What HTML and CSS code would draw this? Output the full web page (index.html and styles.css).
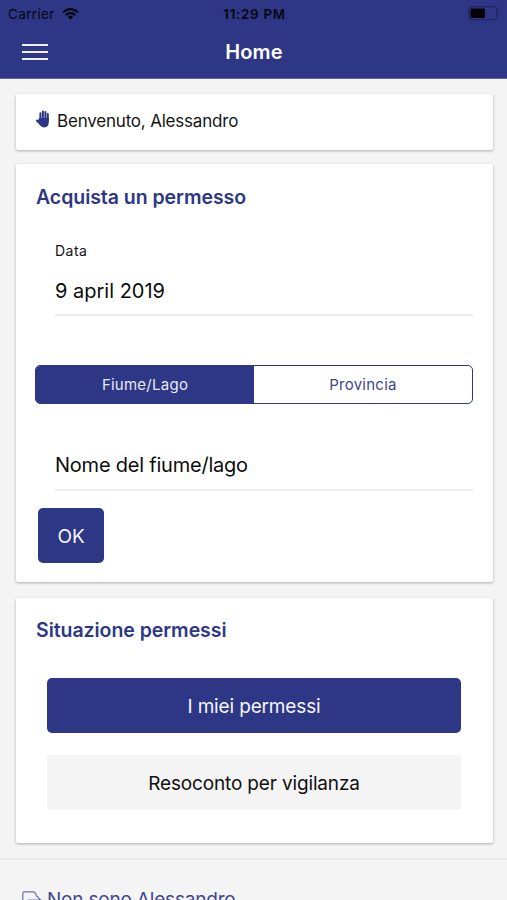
FILE: index.html
```
<!DOCTYPE html>
<html lang="it">
<head>
<meta charset="utf-8">
<title>Home</title>
<link rel="stylesheet" href="styles.css">
</head>
<body>
<header class="header">
  <div class="status">
    <div class="carrier"><span>Carrier</span>
      <svg class="wifi" viewBox="0 0 18 13"><g fill="none" stroke="#05060f" stroke-width="2.4"><path d="M1 4.6Q9-2.2 17 4.6"/><path d="M3.8 7.7Q9 3.2 14.2 7.7"/></g><path d="M6 9.6Q9 7.2 12 9.6L9 12.7Z" fill="#05060f"/></svg>
    </div>
    <div class="time">11:29 PM</div>
    <svg class="battery" viewBox="0 0 33 15"><rect x=".8" y=".8" width="28" height="13" rx="3.2" fill="none" stroke="#1d2356" stroke-width="1.1"/><rect x="2.5" y="2.6" width="14.5" height="9.4" rx="1.2" fill="#020208"/><path d="M30.6 5.3Q32.6 7.3 30.6 9.3Z" fill="#1d2356"/></svg>
  </div>
  <div class="bar">
    <div class="menu"><i></i><i></i><i></i></div>
    <h1 class="title">Home</h1>
    <div class="spacer"></div>
  </div>
</header>
<main class="content">
  <section class="card welcome">
    <svg class="hand" viewBox="0 0 14 18"><g fill="none" stroke="#2d3785" stroke-linecap="round" stroke-width="2"><path d="M4.9 10V3.2M7.4 9V1.6M9.9 9V2M12.3 10V4M5 13.5L1.4 10.6"/></g><path d="M3.9 8H13.3V12.5Q13 17.4 8.6 17.4Q5.8 17.4 4.2 15L1.6 11.6Z" fill="#2d3785"/></svg>
    <span class="greeting">Benvenuto, Alessandro</span>
  </section>
  <section class="card buy">
    <h2 class="heading">Acquista un permesso</h2>
    <div class="field date">
      <div class="label">Data</div>
      <div class="value">9 april 2019</div>
    </div>
    <div class="segment">
      <div class="option active"><span>Fiume/Lago</span></div>
      <div class="option"><span>Provincia</span></div>
    </div>
    <div class="field place"><div class="value river">Nome del fiume/lago</div></div>
    <button class="button ok">OK</button>
  </section>
  <section class="card permits">
    <h2 class="heading">Situazione permessi</h2>
    <div class="actions">
      <button class="button">I miei permessi</button>
      <button class="button light">Resoconto per vigilanza</button>
    </div>
  </section>
</main>
<footer class="footer">
  <svg class="exit" viewBox="0 0 20 18"><g fill="none" stroke="#6d70a6" stroke-width="1.2"><path d="M14 4.5V3L11.8.8H2.2Q.8.8.8 2.2V15.8Q.8 17.2 2.2 17.2H11.8Q13 17.2 13 15.8V14"/><path d="M5.5 9H18.5M14.2 4.5L18.7 9L14.2 13.5"/></g></svg>
  <span class="switch">Non sono Alessandro</span>
</footer>
</body>
</html>
```
FILE: styles.css
```
* { box-sizing: border-box; }
body {
  margin: 0;
  height: 900px;
  overflow: hidden;
  background: #f4f4f4;
  color: #151515;
  font-family: Inter, "Liberation Sans", sans-serif;
}
h1, h2 { margin: 0; }
.header { height: 79px; background: #2d3785; border-bottom: 1px solid #5c64a1; }
.status {
  display: grid;
  grid-template-columns: 1fr auto 1fr;
  align-items: center;
  height: 27px;
  padding: 0 6px 0 8px;
  color: #05060f;
}
.carrier { display: flex; align-items: center; gap: 7px; font-size: 13.5px; letter-spacing: .35px; }
.wifi { width: 17px; height: 12px; }
.time { font-size: 13.3px; font-weight: 600; letter-spacing: .75px; }
.battery { justify-self: end; width: 33px; height: 15px; }
.bar {
  display: grid;
  grid-template-columns: 1fr auto 1fr;
  align-items: center;
  height: 50px;
  padding: 0 21px 0 22px;
}
.menu { display: grid; gap: 5px; width: 26px; }
.menu i { height: 2px; background: #f0f0fa; }
.title { color: #fff; font-size: 20px; line-height: 26px; font-weight: 600; letter-spacing: .15px; }
.content { padding: 15px 15px 0 16px; }
.card {
  width: 477px;
  margin-bottom: 14px;
  background: #fff;
  border-radius: 2px;
  box-shadow: 0 1px 3px rgba(0, 0, 0, .3);
}
.welcome { display: flex; gap: 7px; height: 56px; padding: 16px 19px; }
.hand { width: 15px; height: 18px; }
.greeting { font-size: 17px; line-height: 22px; letter-spacing: -.2px; }
.buy { height: 418px; padding: 20px 20px 0; margin-bottom: 16px; }
.heading { color: #2d3785; font-size: 19.5px; line-height: 26px; font-weight: 600; letter-spacing: -.05px; }
.field { margin-left: 19px; border-bottom: 2px solid #ececec; }
.date { height: 106px; padding-top: 32px; }
.label { font-size: 14px; line-height: 18px; letter-spacing: .5px; }
.value { width: max-content; margin-top: 18px; font-size: 20px; line-height: 26px; color: #0c0c0c; }
.segment {
  display: flex;
  height: 39px;
  margin: 49px 0 0 -1px;
  border: 1px solid #2d3785;
  border-radius: 5px;
  overflow: hidden;
  color: #3f4690;
  font-size: 15px;
  letter-spacing: .25px;
}
.option { display: grid; flex: 1; place-items: center; }
.active { background: #2d3785; color: #e8e9fa; }
.place { height: 87px; padding-top: 31px; }
.river { margin-top: 17px; letter-spacing: -.22px; }
.button {
  display: block;
  height: 55px;
  padding: 2px 0 0;
  border: 0;
  border-radius: 5px;
  background: #2d3785;
  color: #f5f5ff;
  font: 19px/24px Inter, "Liberation Sans", sans-serif;
  letter-spacing: -.15px;
}
.ok { width: 66px; margin: 17px 0 0 2px; }
.permits { height: 245px; padding: 19px 20px 0; }
.actions { display: grid; gap: 22px; margin: 35px 12px 0 11px; }
.light { background: #f4f4f4; color: #101010; border-radius: 3px; }
.footer { display: flex; gap: 5px; margin-top: 15px; border-top: 2px solid #e9e9e9; padding: 27px 22px 0; height: 42px; }
.exit { width: 20px; height: 18px; margin-top: 4px; }
.switch { color: #3f4690; font-size: 19px; line-height: 26px; letter-spacing: -.2px; }
```
